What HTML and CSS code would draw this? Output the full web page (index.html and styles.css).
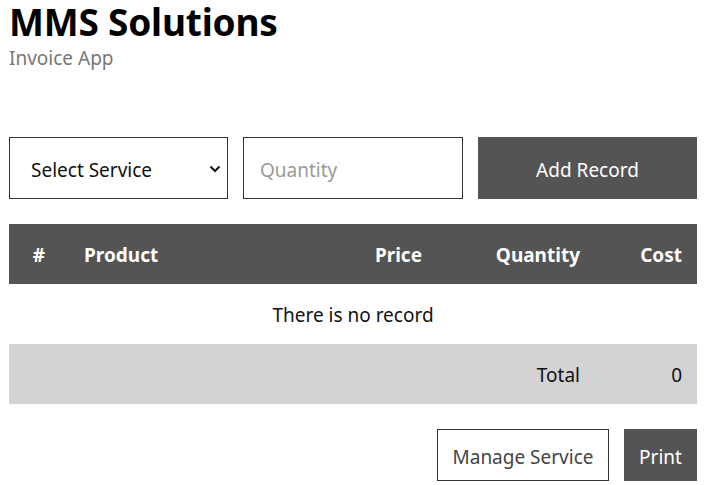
FILE: index.html
```html
<!DOCTYPE html>
<html lang="en">
<head>
<meta charset="utf-8">
<title>MMS Solutions</title>
<link rel="stylesheet" href="styles.css">
</head>
<body>
<div class="app">
  <header class="head">
    <h1 class="title">MMS Solutions</h1>
    <p class="subtitle">Invoice App</p>
  </header>
  <form class="entry">
    <div class="select-wrap">
      <select class="field select">
        <option>Select Service</option>
      </select>
      <svg class="chevron" width="12" height="8" viewBox="0 0 12 8"><path d="M1.5 1.5 L6 6 L10.5 1.5" fill="none" stroke="#111" stroke-width="2"/></svg>
    </div>
    <input class="field" type="text" placeholder="Quantity">
    <button type="button" class="btn btn-dark">Add Record</button>
  </form>
  <table class="records">
    <thead>
      <tr>
        <th class="c-num">#</th>
        <th class="c-prod">Product</th>
        <th class="c-price">Price</th>
        <th class="c-qty">Quantity</th>
        <th class="c-cost">Cost</th>
      </tr>
    </thead>
    <tbody>
      <tr class="empty"><td colspan="5">There is no record</td></tr>
      <tr class="total">
        <td></td><td></td><td></td>
        <td class="c-qty">Total</td>
        <td class="c-cost">0</td>
      </tr>
    </tbody>
  </table>
  <div class="actions">
    <button type="button" class="btn btn-outline">Manage Service</button>
    <button type="button" class="btn btn-dark btn-small">Print</button>
  </div>
</div>
</body>
</html>
```
FILE: styles.css
```css
* { box-sizing: border-box; }
html, body { margin: 0; padding: 0; background: #fff; }
body {
  font-family: "Noto Sans", "Open Sans", "DejaVu Sans", sans-serif;
  color: #111;
  font-size: 19px;
}
.app {
  width: 688px;
  margin-left: 9px;
}
.title {
  margin: 0;
  font-size: 37px;
  font-weight: 700;
  line-height: 44px;
  color: #000;
  letter-spacing: -0.2px;
}
.subtitle {
  margin: 1px 0 0;
  color: #777;
  font-size: 19px;
  line-height: 26px;
}
.entry {
  margin-top: 66px;
  display: grid;
  grid-template-columns: 219px 220px 219px;
  column-gap: 15px;
}
.field {
  height: 62px;
  border: 1px solid #333;
  background: #fff;
  font-family: inherit;
  font-size: 19px;
  padding: 3px 16px 0;
  color: #111;
  border-radius: 0;
  outline: none;
  width: 100%;
}
.field::placeholder { color: #9a9a9a; }
.select-wrap { position: relative; }
.select {
  appearance: none;
  -webkit-appearance: none;
  padding-left: 21px;
}
.chevron {
  position: absolute;
  right: 7px;
  top: 28px;
  pointer-events: none;
}
.btn {
  font-family: inherit;
  font-size: 19px;
  border-radius: 0;
  cursor: pointer;
  padding: 3px 0 0;
}
.btn-dark {
  background: #545454;
  color: #fff;
  border: 0;
}
.entry .btn { height: 62px; }
.records {
  margin-top: 25px;
  width: 688px;
  border-collapse: collapse;
}
.records th, .records td {
  height: 60px;
  padding: 2px 15px 0;
}
.records thead tr { background: #545454; color: #fff; }
.records th { font-weight: 700; text-align: left; }
.c-num { width: 60px; text-align: center !important; }
.c-price { text-align: right !important; width: 200px; }
.c-qty { width: 158px; text-align: right !important; }
.c-cost { width: 102px; text-align: right !important; }
.empty td { text-align: center; }
.total { background: #d3d3d3; }
.actions {
  margin-top: 25px;
  display: flex;
  justify-content: flex-end;
  gap: 15px;
}
.btn-outline {
  background: #fff;
  color: #444;
  border: 1px solid #333;
  height: 52px;
  width: 172px;
}
.btn-small {
  height: 52px;
  width: 73px;
}
```
